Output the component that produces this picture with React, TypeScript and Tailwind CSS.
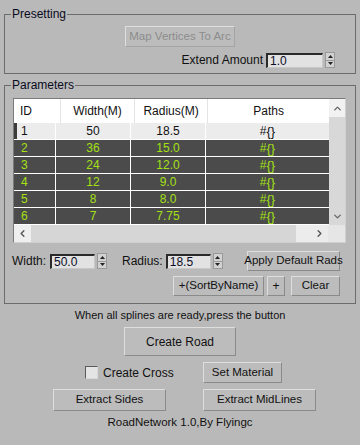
import { ChevronUp, ChevronDown, ChevronLeft, ChevronRight } from 'lucide-react'

const rows = [
  { id: '1', width: '50', radius: '18.5' },
  { id: '2', width: '36', radius: '15.0' },
  { id: '3', width: '24', radius: '12.0' },
  { id: '4', width: '12', radius: '9.0' },
  { id: '5', width: '8', radius: '8.0' },
  { id: '6', width: '7', radius: '7.75' },
]

function MaxButton({
  label,
  className = '',
  disabled = false,
}: {
  label: string
  className?: string
  disabled?: boolean
}) {
  return (
    <button
      className={`flex items-center justify-center border border-t-[#dedede] border-l-[#dedede] border-b-[#8a8a8a] border-r-[#8a8a8a] bg-[#bcbcbc] leading-none whitespace-nowrap ${
        disabled ? 'text-[#8c8c8c] border-b-[#a4a4a4] border-r-[#a4a4a4]' : 'text-[#111]'
      } ${className}`}
    >
      {label}
    </button>
  )
}

function Spinner() {
  return (
    <div className="flex flex-col w-[10px] h-[16px] ml-[2px] border border-[#9a9a9a] bg-[#d2d2d2]">
      <div className="flex-1 flex items-center justify-center border-b border-[#9a9a9a]">
        <svg width="5" height="3" viewBox="0 0 5 3">
          <polygon points="2.5,0 5,3 0,3" fill="#222" />
        </svg>
      </div>
      <div className="flex-1 flex items-center justify-center">
        <svg width="5" height="3" viewBox="0 0 5 3">
          <polygon points="0,0 5,0 2.5,3" fill="#222" />
        </svg>
      </div>
    </div>
  )
}

function NumberField({ value, width }: { value: string; width: string }) {
  return (
    <div className="flex items-center">
      <div
        className={`${width} h-[15px] bg-[#e2e2e2] border-t-2 border-l-2 border-t-[#2a2a2a] border-l-[#2a2a2a] border-b border-r border-b-[#c8c8c8] border-r-[#c8c8c8] pl-[2px] leading-[12px] text-[12px] text-[#0c0c28]`}
      >
        {value}
      </div>
      <Spinner />
    </div>
  )
}

function Group({
  title,
  className = '',
  children,
}: {
  title: string
  className?: string
  children: React.ReactNode
}) {
  return (
    <fieldset className={`border border-[#6c6c6c] ${className}`}>
      <legend className="ml-[6px] px-[1px] leading-[14px] text-[12px] text-[#0a0a1e]">
        {title}
      </legend>
      {children}
    </fieldset>
  )
}

export default function App() {
  return (
    <div className="w-[360px] h-[445px] overflow-hidden bg-[#b9b9b9] px-[4px] font-['Liberation_Sans',Arial,sans-serif] text-[11px] text-[#111]">
      <Group title="Presetting" className="mt-[7px] pb-[5px]">
        <div className="flex justify-center mt-[5px]">
          <MaxButton label="Map Vertices To Arc" disabled className="w-[110px] h-[21px] text-[11.5px]" />
        </div>
        <div className="flex items-center justify-end mt-[5px] pr-[20px] h-[16px]">
          <span className="mr-[3px] text-[12px]">Extend Amount</span>
          <NumberField value="1.0" width="w-[57px]" />
        </div>
      </Group>

      <Group title="Parameters" className="mt-[4px] pb-[7px]">
        <div className="mt-[6px] ml-[8px] w-[333px] h-[145px] border border-[#7a7a7a] border-r-[#d0d0d0] border-b-[#d0d0d0] bg-[#ececec] flex flex-col">
          <div className="flex">
            <div className="w-[315px] flex flex-col">
              <div className="flex h-[24px] bg-white text-[12px] text-[#111]">
                <div className="w-[41px] pl-[6px] flex items-center border-r border-[#e4e4e4] box-content">ID</div>
                <div className="w-[74px] flex items-center justify-center border-r border-[#e4e4e4] box-content">Width(M)</div>
                <div className="w-[74px] flex items-center justify-center border-r border-[#e4e4e4] box-content">Radius(M)</div>
                <div className="w-[123px] flex items-center justify-center">Paths</div>
              </div>
              {rows.map((r, i) => {
                const first = i === 0
                return (
                  <div
                    key={r.id}
                    className={`flex h-[17px] border-b border-white text-[12px] ${
                      first ? 'bg-[#ececec] text-[#111]' : 'bg-[#4b4b4b] text-[#a4e014]'
                    }`}
                  >
                    <div className="w-[41px] flex items-center border-r border-white box-content">
                      <div className={`w-[3px] h-full ${first ? 'bg-[#3c3c3c]' : ''}`} />
                      <span className="pl-[4px]">{r.id}</span>
                    </div>
                    <div className="w-[74px] flex items-center justify-center border-r border-white box-content">{r.width}</div>
                    <div className="w-[74px] flex items-center justify-center border-r border-white box-content">{r.radius}</div>
                    <div className="w-[123px] flex items-center justify-center">
                      #<span className="text-[13px] leading-none">{'{}'}</span>
                    </div>
                  </div>
                )
              })}
            </div>
            <div className="w-[17px] flex flex-col bg-[#d8d8d8]">
              <div className="h-[18px] bg-[#f2f2f2] flex items-center justify-center">
                <ChevronUp size={11} strokeWidth={3} color="#666" />
              </div>
              <div className="flex-1" />
              <div className="h-[17px] flex items-center justify-center">
                <ChevronDown size={11} strokeWidth={3} color="#666" />
              </div>
            </div>
          </div>
          <div className="flex h-[17px]">
            <div className="w-[17px] bg-[#efefef] flex items-center justify-center">
              <ChevronLeft size={11} strokeWidth={3} color="#555" />
            </div>
            <div className="w-[266px] bg-[#d6d6d6]" />
            <div className="w-[15px] bg-[#ececec]" />
            <div className="w-[17px] bg-[#ececec] flex items-center justify-center">
              <ChevronRight size={11} strokeWidth={3} color="#555" />
            </div>
            <div className="w-[17px] bg-[#e6e6e6]" />
          </div>
        </div>

        <div className="flex items-center mt-[8px] pl-[7px] h-[20px]">
          <span className="mr-[4px] text-[12px]">Width:</span>
          <NumberField value="50.0" width="w-[45px]" />
          <span className="ml-[15px] mr-[3px] text-[12px]">Radius:</span>
          <NumberField value="18.5" width="w-[45px]" />
          <MaxButton label="Apply Default Rads" className="ml-auto mr-[15px] w-[93px] h-[20px] text-[11.5px]" />
        </div>

        <div className="flex items-center justify-end mt-[5px] pr-[15px] h-[20px] gap-[3px]">
          <MaxButton label="+(SortByName)" className="w-[91px] h-[20px] text-[11.5px]" />
          <MaxButton label="+" className="w-[18px] h-[20px] text-[12px]" />
          <MaxButton label="Clear" className="ml-[3px] w-[49px] h-[20px] text-[11.5px]" />
        </div>
      </Group>

      <div className="mt-[5px] leading-[13px] text-center text-[11px]">
        When all splines are ready,press the button
      </div>

      <div className="flex justify-center mt-[5px]">
        <MaxButton label="Create Road" className="w-[112px] h-[29px] text-[12px]" />
      </div>

      <div className="flex items-center mt-[6px] h-[21px] pl-[81px]">
        <div className="w-[118px] flex items-center">
          <div className="w-[13px] h-[13px] bg-[#e4e4e4] border border-t-[#5a5a5a] border-l-[#5a5a5a] border-b-[#d8d8d8] border-r-[#d8d8d8]" />
          <span className="ml-[5px] text-[12px]">Create Cross</span>
        </div>
        <MaxButton label="Set Material" className="w-[79px] h-[21px] text-[11.5px]" />
      </div>

      <div className="flex items-center mt-[6px] h-[22px] pl-[49px] gap-[37px]">
        <MaxButton label="Extract Sides" className="w-[113px] h-[22px] text-[11.5px]" />
        <MaxButton label="Extract MidLines" className="w-[113px] h-[22px] text-[11.5px]" />
      </div>

      <div className="mt-[5px] leading-[13px] text-center text-[11.5px]">
        RoadNetwork 1.0,By Flyingc
      </div>
    </div>
  )
}
